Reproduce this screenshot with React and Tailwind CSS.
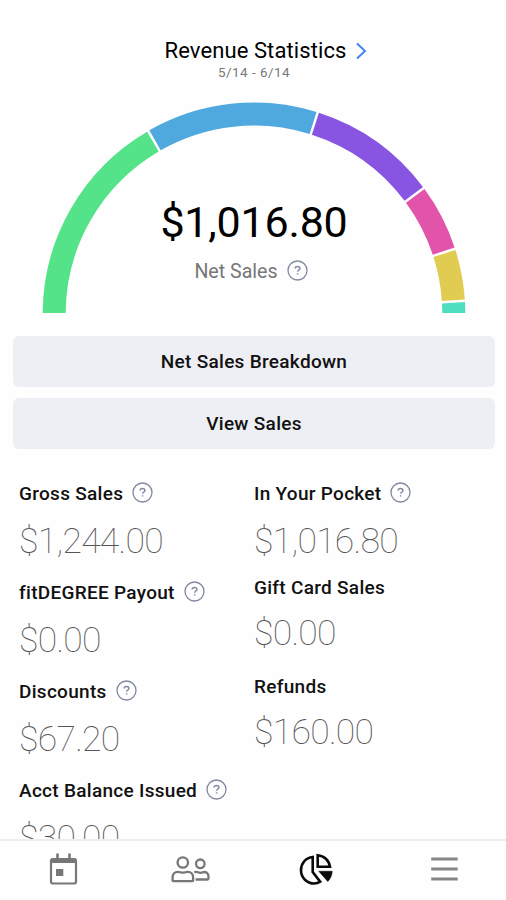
import React from 'react';

const CX = 254;
const CY = 313.9;
const R = 199.8;

// start / end angles in degrees, 180 = left, 0 = right
const segments = [
  { from: 180, to: 120.4, color: '#55e38a' },
  { from: 119.7, to: 72.8, color: '#4fa9df' },
  { from: 72.1, to: 36.9, color: '#8854e2' },
  { from: 36.2, to: 18.3, color: '#e254aa' },
  { from: 17.6, to: 3.9, color: '#e0cc50' },
  { from: 3.2, to: 0, color: '#4fdfc0' },
];

const point = (deg) => {
  const rad = (deg * Math.PI) / 180;
  return `${CX + R * Math.cos(rad)} ${CY - R * Math.sin(rad)}`;
};

const RevenueGauge = () => (
  <svg className="block w-[506px] h-[222.5px]" viewBox="0 90 506 222.5" fill="none">
    {segments.map((s) => (
      <path
        key={s.color}
        d={`M${point(s.from)} A${R} ${R} 0 0 1 ${point(s.to)}`}
        stroke={s.color}
        strokeWidth="23"
      />
    ))}
  </svg>
);

const HelpIcon = ({ className }) => (
  <svg className={`w-[21px] h-[21px] shrink-0 ${className}`} viewBox="0 0 21 21" fill="none">
    <circle cx="10.5" cy="10.5" r="9.5" stroke="#8089a0" strokeWidth="1.3" />
    <path
      d="M8.1 8.6c0-1.4 1-2.2 2.4-2.2s2.4.8 2.4 2c0 1.6-2.3 1.6-2.3 3.4M10.6 13.2v1.4"
      stroke="#8089a0"
      strokeWidth="1.5"
    />
  </svg>
);

const Stat = ({ label, value, help }) => (
  <div className={help ? 'h-[99px]' : 'h-[98.5px]'}>
    <div className={`flex items-center ${help ? 'h-[22px]' : 'h-4'}`}>
      <span className={`text-[19px] leading-5 font-medium tracking-[0.29px] text-[#111] whitespace-nowrap ${help ? 'pt-[3px]' : ''}`}>
        {label}
      </span>
      {help && <HelpIcon className="ml-[9px]" />}
    </div>
    <div className={`text-[35.5px] leading-[50px] font-thin tracking-[-0.7px] text-[#555] whitespace-nowrap ${help ? 'mt-[13px]' : 'mt-3'}`}>
      {value}
    </div>
  </div>
);

const leftStats = [
  { label: 'Gross Sales', value: '$1,244.00', help: true },
  { label: 'fitDEGREE Payout', value: '$0.00', help: true },
  { label: 'Discounts', value: '$67.20', help: true },
  { label: 'Acct Balance Issued', value: '$30.00', help: true },
];

const rightStats = [
  { label: 'In Your Pocket', value: '$1,016.80', help: true },
  { label: 'Gift Card Sales', value: '$0.00' },
  { label: 'Refunds', value: '$160.00' },
];

const CalendarIcon = () => (
  <svg className="w-10 h-10" viewBox="0 0 40 40" fill="none">
    <path d="M8 8.5h25v4.5H8z" fill="#777" />
    <rect x="8" y="9" width="25" height="24.5" rx="2" stroke="#777" strokeWidth="2.2" />
    <path d="M14.5 3.5v6M26.5 3.5v6" stroke="#777" strokeWidth="2.6" />
    <rect x="13" y="19" width="7.3" height="7" fill="#777" />
  </svg>
);

const PeopleIcon = () => (
  <svg className="w-10 h-10 overflow-visible" viewBox="0 0 40 40" fill="none" stroke="#777" strokeWidth="2.3">
    <circle cx="12.8" cy="12.5" r="5.2" />
    <circle cx="30.3" cy="13.8" r="4.3" />
    <path d="M2.6 30.6v-3.2c0-3.6 2.3-5.6 5.2-5.6 2 0 3 .9 5 .9s3-.9 5-.9c3 0 5.3 2 5.3 5.6v3.2q0 .6-.6.6H3.2q-.6 0-.6-.6z" />
    <path d="M24.3 22.5c1.500-.9 2.800-.6 3.700-.2 1.600.7 3.200.7 4.800 0 3-1 5.700.8 5.700 4.200v1.800q0 1.200-1.200 1.200H25.600" />
  </svg>
);

const ChartIcon = () => (
  <svg className="w-10 h-10" viewBox="0 0 40 40" fill="none" stroke="#0a0a0a" strokeWidth="2.6">
    <path d="M16.7 7C9.8 7.6 5 13.3 5 20.3 5 27.8 11 33.5 18.2 33.5c2.4 0 4.2-.6 6-1.8L16.7 22z" />
    <path d="M21.7 5.2c6.3.5 11.3 5 12.3 11.6H21.700z" />
    <path d="M22.8 21.3h13.4c-.3 4.2-1.600 7.200-4.400 10.200z" fill="#0a0a0a" strokeWidth="0.6" />
  </svg>
);

const MenuIcon = () => (
  <svg className="w-10 h-10" viewBox="0 0 40 40" fill="none">
    <path d="M8.2 9h26.5M8.2 19h26.5M8.2 29h26.5" stroke="#858585" strokeWidth="3" />
  </svg>
);

const App = () => {
  return (
    <div className="w-[506px] h-[900px] flex flex-col overflow-hidden bg-[#fefefe] font-[Roboto,sans-serif]">
      <header className="h-[90px] shrink-0 pt-[39px] flex flex-col items-center">
        <div className="flex items-center pl-7">
          <h1 className="text-[22px] leading-6 tracking-[0.1px] text-black whitespace-nowrap">Revenue Statistics</h1>
          <svg className="ml-[7px] w-4 h-5" viewBox="0 0 16 20" fill="none">
            <path d="M3 2.5l8 7.5-8 7.5" stroke="#3b82f6" strokeWidth="1.9" />
          </svg>
        </div>
        <p className="pl-0.5 text-[13.4px] leading-5 tracking-[0.5px] text-[#777]">5/14 - 6/14</p>
      </header>

      <section className="relative shrink-0">
        <RevenueGauge />
        <div className="absolute inset-x-0 top-[107px] flex flex-col items-center">
          <div className="pl-0.5 text-[43px] leading-[50px] tracking-[-0.2px] text-black">$1,016.80</div>
          <div className="mt-2.5 pr-1 flex items-center">
            <span className="pt-[3px] text-[19.6px] leading-6 text-[#777]">Net Sales</span>
            <HelpIcon className="ml-[9px]" />
          </div>
        </div>
      </section>

      <div className="shrink-0 mt-[23.5px] pl-[13px] pr-[11px] flex flex-col gap-[11px]">
        <button className="h-[51px] pt-0.5 rounded-md bg-[#eeeff4] text-[19px] font-medium tracking-[0.3px] text-[#111]">
          Net Sales Breakdown
        </button>
        <button className="h-[51px] pt-0.5 rounded-md bg-[#eeeff4] text-[19px] font-medium tracking-[0.3px] text-[#111]">
          View Sales
        </button>
      </div>

      <main className="flex-1 min-h-0 overflow-hidden mt-8 pl-[19px] flex">
        <div className="w-[235px] shrink-0">
          {leftStats.map((s) => (
            <Stat key={s.label} {...s} />
          ))}
        </div>
        <div className="flex-1">
          {rightStats.map((s) => (
            <Stat key={s.label} {...s} />
          ))}
        </div>
      </main>

      <nav className="h-[61px] shrink-0 grid grid-cols-4 justify-items-center pt-[9px] border-t-2 border-[#ededed]">
        <CalendarIcon />
        <PeopleIcon />
        <ChartIcon />
        <MenuIcon />
      </nav>
    </div>
  );
};

export default App;
